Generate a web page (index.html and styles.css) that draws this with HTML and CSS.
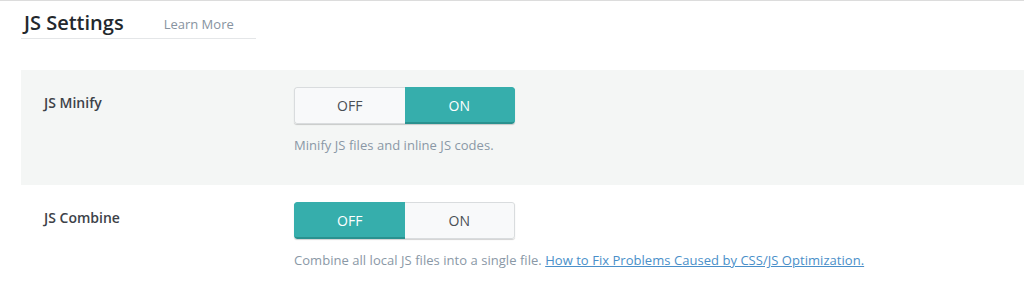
FILE: index.html
```html
<!DOCTYPE html>
<html>
<head>
<meta charset="utf-8">
<link rel="stylesheet" href="styles.css">
</head>
<body>
<div class="page">
  <div class="head">
    <h2 class="title">JS Settings</h2>
    <a class="learn">Learn More</a>
  </div>
  <div class="rows">
    <div class="row row-alt">
      <div class="label">JS Minify</div>
      <div class="control">
        <div class="toggle">
          <span class="opt">OFF</span>
          <span class="opt active">ON</span>
        </div>
        <div class="desc">Minify JS files and inline JS codes.</div>
      </div>
    </div>
    <div class="row">
      <div class="label">JS Combine</div>
      <div class="control">
        <div class="toggle">
          <span class="opt active">OFF</span>
          <span class="opt">ON</span>
        </div>
        <div class="desc">Combine all local JS files into a single file. <a class="link">How to Fix Problems Caused by CSS/JS Optimization.</a></div>
      </div>
    </div>
  </div>
</div>
</body>
</html>
```
FILE: styles.css
```css
html, body {
  margin: 0;
  padding: 0;
  background: #fff;
}
body {
  font-family: "Open Sans", "Noto Sans", sans-serif;
  color: #333;
  border-top: 1px solid #dcdcdc;
}
.page {
  padding-left: 21px;
}
.head {
  width: 235px;
  height: 38px;
  border-bottom: 1px solid #e4e6e8;
  display: flex;
  align-items: center;
  box-sizing: border-box;
  padding-left: 3px;
  padding-top: 7px;
}
.title {
  margin: 0;
  font-size: 20px;
  font-weight: 600;
  color: #23282d;
  line-height: 26px;
}
.learn {
  margin-left: 40px;
  font-size: 13px;
  color: #8793a0;
  margin-top: 2px;
}
.rows {
  margin-top: 31px;
}
.row {
  display: flex;
  height: 115px;
  box-sizing: border-box;
  padding-top: 17px;
}
.row-alt {
  background: #f4f6f5;
}
.label {
  width: 250px;
  padding-left: 23px;
  padding-top: 6px;
  font-size: 14px;
  font-weight: 600;
  color: #3d4248;
  line-height: 20px;
}
.control {
  display: flex;
  flex-direction: column;
}
.toggle {
  display: flex;
  width: 221px;
  height: 37px;
  border-radius: 3px;
  box-shadow: 0 1px 1px rgba(0,0,0,0.18);
  overflow: hidden;
}
.opt {
  flex: 1;
  display: flex;
  align-items: center;
  justify-content: center;
  font-size: 14px;
  color: #4a4f55;
  background: #f8f9fa;
  border: 1px solid #d9dcde;
  box-sizing: border-box;
}
.opt:first-child {
  border-right: none;
  border-radius: 3px 0 0 3px;
}
.opt:last-child {
  border-left: none;
  border-radius: 0 3px 3px 0;
}
.opt.active {
  background: #36aeac;
  border-color: #36aeac;
  border-bottom: 2px solid #2a918f;
  color: #fff;
}
.desc {
  margin-top: 11px;
  font-size: 13px;
  line-height: 20px;
  color: #8a98a6;
  letter-spacing: 0.04px;
}
.link {
  color: #4a8fc9;
  text-decoration: underline;
}
```
